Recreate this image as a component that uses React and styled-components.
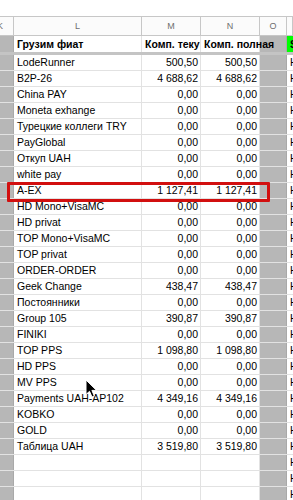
import React from 'react';
import styled, { createGlobalStyle } from 'styled-components';

const GlobalStyle = createGlobalStyle`
  html, body {
    margin: 0;
    padding: 0;
    background: #ffffff;
  }

  body {
    font-family: "Liberation Sans", Arial, sans-serif;
    overflow: hidden;
  }
`;

const COLS = '14px 128px 59px 59px 27px 6px';

const Sheet = styled.div`
  position: relative;
  width: 293px;
  height: 500px;
  overflow: hidden;
  background: #ffffff;
`;

const TopSpace = styled.div`
  height: 16px;
  background: #ffffff;
`;

const LetterRow = styled.div`
  display: grid;
  grid-template-columns: ${COLS};
  height: 20px;
  border-top: 1px solid #c7c7c7;
  border-bottom: 1px solid #c7c7c7;
  box-sizing: border-box;
  background: #fbfbfb;
`;

const Letter = styled.div`
  display: flex;
  align-items: center;
  justify-content: ${({ $cut }) => ($cut ? 'flex-start' : 'center')};
  padding-left: ${({ $cut }) => ($cut ? '0' : '0')};
  border-right: 1px solid #c7c7c7;
  font-size: 9px;
  color: #6f6f6f;
  overflow: hidden;

  span {
    margin-left: ${({ $cut }) => ($cut ? '-3px' : '0')};
  }
`;

const Row = styled.div`
  display: grid;
  grid-template-columns: ${COLS};
  height: ${({ $head }) => ($head ? '19px' : '16px')};
  box-sizing: border-box;
  border-bottom: ${({ $head }) => ($head ? '3px solid #c4c4c4' : '1px solid #e2e2e2')};
`;

const Cell = styled.div`
  display: flex;
  align-items: flex-end;
  justify-content: ${({ $num }) => ($num ? 'flex-end' : 'flex-start')};
  padding: 0 ${({ $num }) => ($num ? '2px' : '3px')} 2px 3px;
  box-sizing: border-box;
  border-right: 1px solid ${({ $gray }) => ($gray ? '#a9a9a9' : '#e2e2e2')};
  background: ${({ $bg }) => $bg || 'transparent'};
  font-size: 10.5px;
  line-height: 12px;
  font-weight: ${({ $bold }) => ($bold ? 700 : 400)};
  color: #000000;
  white-space: nowrap;
  overflow: ${({ $spill }) => ($spill ? 'visible' : 'hidden')};
  min-width: 0;
`;

const Spill = styled.span`
  position: relative;
  z-index: 1;
`;

const Highlight = styled.div`
  position: absolute;
  left: 7px;
  top: 182px;
  width: 263px;
  height: 20px;
  box-sizing: border-box;
  border: 3px solid #d20f0f;
  border-radius: 1px;
  pointer-events: none;
`;

const Cursor = styled.svg`
  position: absolute;
  left: 85px;
  top: 379px;
  width: 13px;
  height: 19px;
`;

const GRAY = '#b7b7b7';

const rows = [
  ['LodeRunner', '500,50', '500,50'],
  ['B2P-26', '4 688,62', '4 688,62'],
  ['China PAY', '0,00', '0,00'],
  ['Moneta exhange', '0,00', '0,00'],
  ['Турецкие коллеги TRY', '0,00', '0,00'],
  ['PayGlobal', '0,00', '0,00'],
  ['Откуп UAH', '0,00', '0,00'],
  ['white pay', '0,00', '0,00'],
  ['A-EX', '1 127,41', '1 127,41'],
  ['HD Mono+VisaMC', '0,00', '0,00'],
  ['HD privat', '0,00', '0,00'],
  ['TOP Mono+VisaMC', '0,00', '0,00'],
  ['TOP privat', '0,00', '0,00'],
  ['ORDER-ORDER', '0,00', '0,00'],
  ['Geek Change', '438,47', '438,47'],
  ['Постоянники', '0,00', '0,00'],
  ['Group 105', '390,87', '390,87'],
  ['FINIKI', '0,00', '0,00'],
  ['TOP PPS', '1 098,80', '1 098,80'],
  ['HD PPS', '0,00', '0,00'],
  ['MV PPS', '0,00', '0,00'],
  ['Payments UAH-AP102', '4 349,16', '4 349,16'],
  ['KOBKO', '0,00', '0,00'],
  ['GOLD', '0,00', '0,00'],
  ['Таблица UAH', '3 519,80', '3 519,80'],
  ['', '', ''],
  ['', '', ''],
  ['', '', ''],
];

export default function App() {
  return (
    <>
      <GlobalStyle />
      <Sheet>
        <TopSpace />
        <LetterRow>
          <Letter $cut><span>K</span></Letter>
          <Letter>L</Letter>
          <Letter>M</Letter>
          <Letter>N</Letter>
          <Letter>O</Letter>
          <Letter />
        </LetterRow>

        <Row $head>
          <Cell $bg={GRAY} $gray />
          <Cell $bold>Грузим фиат</Cell>
          <Cell $bold>Комп. текущая</Cell>
          <Cell $bold $spill><Spill>Комп. полная</Spill></Cell>
          <Cell $bg={GRAY} $gray />
          <Cell $bold $bg="#00ff00">S</Cell>
        </Row>

        {rows.map(([name, cur, full], i) => (
          <Row key={i}>
            <Cell $bg={GRAY} $gray />
            <Cell>{name}</Cell>
            <Cell $num>{cur}</Cell>
            <Cell $num>{full}</Cell>
            <Cell $bg={GRAY} $gray />
            <Cell>Нет</Cell>
          </Row>
        ))}

        <Highlight />
        <Cursor viewBox="0 0 13 19">
          <path
            d="M1 1 L1 15.5 L4.5 12.3 L7 18 L9.3 17 L6.9 11.4 L11.6 11.4 Z"
            fill="#000000"
            stroke="#ffffff"
            strokeWidth="1"
            strokeLinejoin="round"
          />
        </Cursor>
      </Sheet>
    </>
  );
}
